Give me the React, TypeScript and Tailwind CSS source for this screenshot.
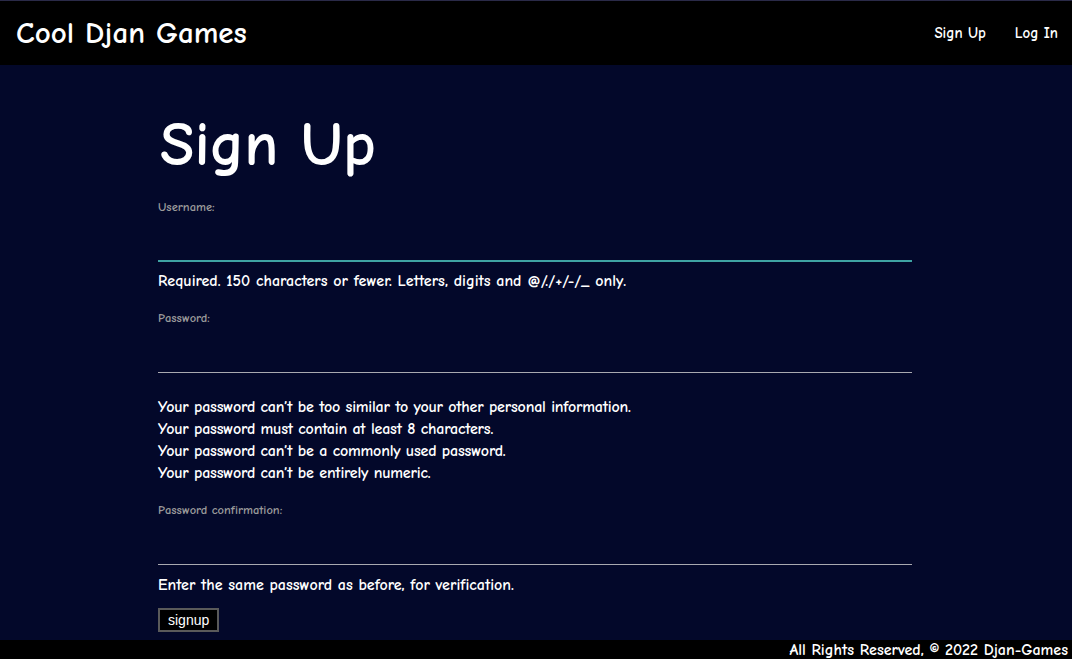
import React from "react";

const font = { fontFamily: '"Comic Sans MS", "Comic Neue", "Noto Sans", sans-serif' };

function Field({ label, focused }: { label: string; focused?: boolean }) {
  return (
    <div>
      <label className="block text-[12.5px] leading-[14px] text-[#9a9a9a]">{label}</label>
      <input
        type="text"
        className={
          "block w-full h-[48px] bg-transparent outline-none text-white " +
          (focused ? "border-b-2 border-[#3fa3a3]" : "border-b border-[#a9a9b0]")
        }
      />
    </div>
  );
}

export default function App() {
  return (
    <div
      className="min-h-[659px] h-[659px] flex flex-col bg-[#03082a] text-white overflow-hidden font-bold"
      style={font}
    >
      <nav className="h-[65px] shrink-0 border-t border-[#2a2a48] bg-black flex items-center justify-between pl-[16px] pr-[14px]">
        <span className="text-[31px] leading-none">Cool Djan Games</span>
        <div className="flex items-center gap-[29px] text-[15px]">
          <a>Sign Up</a>
          <a>Log In</a>
        </div>
      </nav>
      <main className="flex-1 pl-[158px] w-[912px]">
        <h1 className="text-[63px] leading-none mt-[48px] mb-[24px] ml-[2px]">Sign Up</h1>
        <Field label="Username:" focused />
        <p className="text-[16px] leading-[20px] mt-[9px]">
          Required. 150 characters or fewer. Letters, digits and @/./+/-/_ only.
        </p>
        <div className="mt-[20px]">
          <Field label="Password:" />
        </div>
        <ul className="text-[16px] leading-[22px] mt-[23px] tracking-[-0.2px]">
          <li>Your password can’t be too similar to your other personal information.</li>
          <li>Your password must contain at least 8 characters.</li>
          <li>Your password can’t be a commonly used password.</li>
          <li>Your password can’t be entirely numeric.</li>
        </ul>
        <div className="mt-[19px]">
          <Field label="Password confirmation:" />
        </div>
        <p className="text-[16px] leading-[20px] mt-[10px]">Enter the same password as before, for verification.</p>
        <button
          className="mt-[13px] h-[24px] px-[8px] bg-black border-2 border-[#5a5a5a] text-[14px] leading-none text-white font-normal"
          style={{ fontFamily: '"Liberation Sans", Arial, sans-serif' }}
        >
          signup
        </button>
      </main>
      <footer className="h-[19px] shrink-0 bg-black flex items-end justify-end pr-[4px] text-[16px] leading-[17px]">
        All Rights Reserved, © 2022 Djan-Games
      </footer>
    </div>
  );
}
